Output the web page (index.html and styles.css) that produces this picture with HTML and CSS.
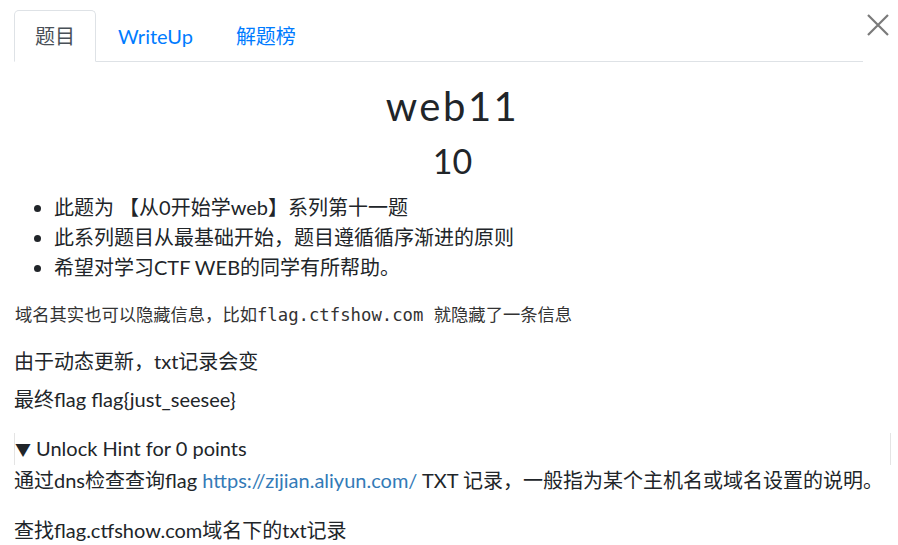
FILE: index.html
```html
<!DOCTYPE html>
<html lang="zh">
<head>
<meta charset="utf-8">
<title>web11</title>
<link rel="stylesheet" href="styles.css">
</head>
<body>
<div class="modal">
  <div class="header">
    <ul class="tabs">
      <li class="tab active">题目</li>
      <li class="tab">WriteUp</li>
      <li class="tab">解题榜</li>
    </ul>
    <button class="close" aria-label="Close">
      <svg width="22" height="22" viewBox="0 0 22 22"><path d="M1 1L21 21M21 1L1 21" stroke="#7a7a7a" stroke-width="2.2" fill="none"/></svg>
    </button>
  </div>
  <h1 class="title">web11</h1>
  <h2 class="points">10</h2>
  <ul class="desc">
    <li>此题为 【从0开始学web】系列第十一题</li>
    <li>此系列题目从最基础开始，题目遵循循序渐进的原则</li>
    <li>希望对学习CTF WEB的同学有所帮助。</li>
  </ul>
  <pre class="code">域名其实也可以隐藏信息，比如flag.ctfshow.com 就隐藏了一条信息</pre>
  <p class="line">由于动态更新，txt记录会变</p>
  <p class="line last">最终flag flag{just_seesee}</p>
  <details class="hint" open>
    <summary><span class="arrow">▼</span>Unlock Hint for 0 points</summary>
    <p class="hint-text">通过dns检查查询flag <a href="#">https://zijian.aliyun.com/</a> TXT 记录，一般指为某个主机名或域名设置的说明。</p>
    <p class="hint-text">查找flag.ctfshow.com域名下的txt记录</p>
  </details>
</div>
</body>
</html>
```
FILE: styles.css
```css
html, body {
  margin: 0;
  padding: 0;
  background: #fff;
}
body {
  font-family: Lato, "Noto Sans CJK SC", sans-serif;
  font-size: 20px;
  line-height: 1.5;
  color: #212529;
}
.modal {
  padding: 10px 7px 0 14px;
}
.header {
  display: flex;
  align-items: flex-start;
}
.tabs {
  flex: 1;
  display: flex;
  list-style: none;
  margin: 0;
  padding: 0;
  border-bottom: 1px solid #dee2e6;
}
.tab {
  padding: 10px 20px;
  border: 1px solid transparent;
  border-top-left-radius: 5px;
  border-top-right-radius: 5px;
  margin-bottom: -1px;
  color: #007bff;
  line-height: 30px;
}
.tab:nth-child(2) {
  padding-right: 21px;
  padding-left: 21px;
}
.tab.active {
  color: #495057;
  border-color: #dee2e6 #dee2e6 #fff;
  background: #fff;
}
.close {
  width: 28px;
  height: 40px;
  border: 0;
  background: none;
  padding: 4px 0 0 4px;
  display: flex;
  align-items: flex-start;
  justify-content: flex-start;
  cursor: pointer;
}
.title {
  margin: 20px 0 0;
  text-align: center;
  font-size: 40px;
  font-weight: 400;
  line-height: 48px;
  letter-spacing: 2.5px;
}
.points {
  margin: 9px 0 0;
  text-align: center;
  font-size: 34px;
  font-weight: 400;
  line-height: 43px;
}
.desc {
  margin: 10px 0 20px;
  padding-left: 40px;
  line-height: 30px;
}
.code {
  margin: 0 0 18px;
  font-family: "DejaVu Sans Mono", "Noto Sans CJK SC", monospace;
  font-size: 17.3px;
  line-height: 26px;
  color: #333;
  padding-left: 1px;
}
.line {
  margin: 0 0 8px;
  line-height: 30px;
}
.line.last {
  margin-bottom: 19px;
}
.hint summary {
  display: block;
  line-height: 30px;
  border-left: 1px solid #e4e4e4;
  border-right: 1px solid #e4e4e4;
  list-style: none;
}
.hint summary::-webkit-details-marker {
  display: none;
}
.arrow {
  font-size: 16px;
  margin-right: 5px;
}
.hint-text {
  margin: 0 0 20px;
  line-height: 30px;
}
.hint-text a {
  color: #337ab7;
  text-decoration: none;
}
```
